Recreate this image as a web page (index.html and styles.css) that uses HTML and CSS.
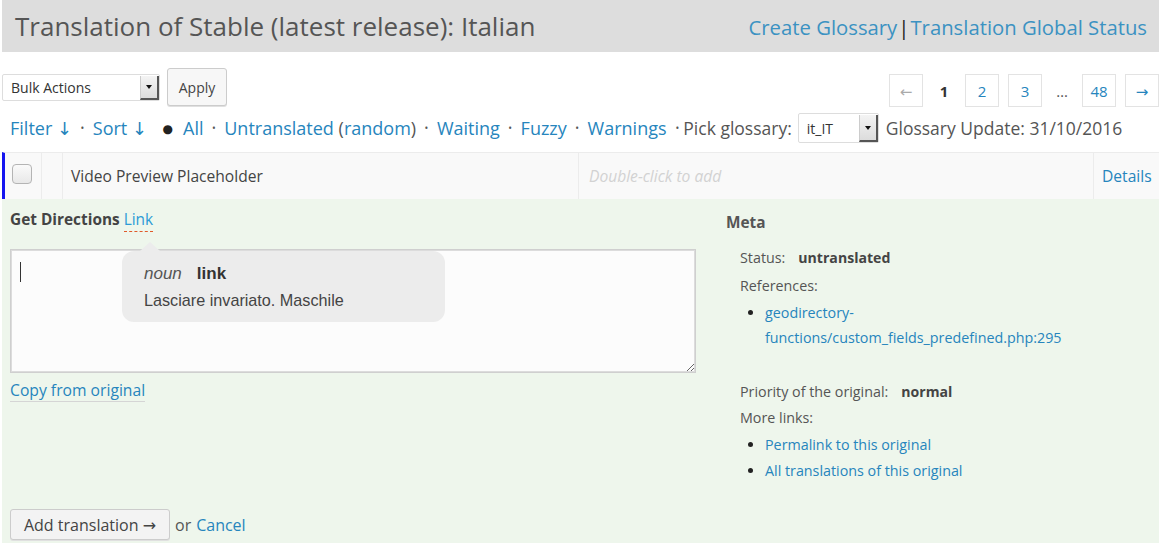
FILE: index.html
```html
<!DOCTYPE html>
<html lang="en">
<head>
<meta charset="utf-8">
<title>Translation of Stable (latest release): Italian</title>
<link rel="stylesheet" href="styles.css">
</head>
<body>
<header class="gp-head">
  <h2 class="gp-title">Translation of Stable (latest release): Italian</h2>
  <div class="glossary-links"><a href="#">Create Glossary</a><span class="sep">|</span><a href="#">Translation Global Status</a></div>
</header>

<div class="toolbar">
  <div class="bulk">
    <div class="fake-select bulk-select"><span class="fs-label">Bulk Actions</span><span class="fs-arrow"></span></div>
    <button class="btn apply">Apply</button>
  </div>
  <nav class="paging">
    <span class="pbox prev">&larr;</span>
    <span class="pcur">1</span>
    <a class="pbox" href="#">2</a>
    <a class="pbox" href="#">3</a>
    <span class="pdots">&hellip;</span>
    <a class="pbox" href="#">48</a>
    <a class="pbox next" href="#">&rarr;</a>
  </nav>
</div>

<div class="filters">
  <a href="#">Filter &darr;</a><span class="dot">&bull;</span><a href="#">Sort &darr;</a><span class="bigdot">&#9679;</span><a href="#">All</a><span class="dot">&bull;</span><a href="#">Untranslated</a>&nbsp;<span class="paren">(</span><a href="#">random</a><span class="paren">)</span><span class="dot">&bull;</span><a href="#">Waiting</a><span class="dot">&bull;</span><a href="#">Fuzzy</a><span class="dot">&bull;</span><a href="#">Warnings</a><span class="dot tight">&bull;</span><span class="label">Pick glossary:</span>
  <div class="fake-select gl-select"><span class="fs-label">it_IT</span><span class="fs-arrow"></span></div>
  <span class="label">Glossary Update: 31/10/2016</span>
</div>

<div class="translations">
  <div class="preview">
    <div class="cell c-check"><span class="checkbox"></span></div>
    <div class="cell c-prio"></div>
    <div class="cell c-orig">Video Preview Placeholder</div>
    <div class="cell c-trans">Double-click to add</div>
    <div class="cell c-act"><a href="#">Details</a></div>
  </div>

  <div class="editor">
    <div class="editor-grid">
      <div class="strings">
        <div class="original"><span class="orig-text">Get Directions</span> <a class="glossary-word" href="#">Link</a></div>
        <div class="textarea-wrap">
          <textarea class="tr-input" rows="4"></textarea>
          <span class="caret"></span>
          <div class="tooltip">
            <div class="tt-head"><em class="pos">noun</em><strong class="term">link</strong></div>
            <div class="tt-body">Lasciare invariato. Maschile</div>
          </div>
        </div>
        <a class="copy" href="#">Copy from original</a>
      </div>
      <div class="meta">
        <h3>Meta</h3>
        <dl>
          <div class="row"><dt>Status:</dt><dd class="strong">untranslated</dd></div>
          <div class="row col"><dt>References:</dt>
            <dd><ul><li><a href="#">geodirectory-<br>functions/custom_fields_predefined.php:295</a></li></ul></dd>
          </div>
          <div class="row gap"><dt>Priority of the original:</dt><dd class="strong">normal</dd></div>
          <div class="row col"><dt>More links:</dt>
            <dd><ul>
              <li><a href="#">Permalink to this original</a></li>
              <li><a href="#">All translations of this original</a></li>
            </ul></dd>
          </div>
        </dl>
      </div>
    </div>
    <div class="actions">
      <button class="btn add">Add translation &rarr;</button>
      <span class="or">or</span> <a href="#">Cancel</a>
    </div>
  </div>
</div>
</body>
</html>
```

FILE: styles.css
```css
html, body {
  margin: 0;
}
body {
  font-family: "Open Sans", "DejaVu Sans", sans-serif;
  color: #555;
  background: #fff;
  padding-left: 2px;
  height: 543px;
  overflow: hidden;
}
a {
  color: #2685bd;
  text-decoration: none;
}

/* header */
.gp-head {
  display: flex;
  align-items: center;
  justify-content: space-between;
  height: 52px;
  background: #dddddd;
  padding: 0 12px 0 13px;
}
.gp-title {
  margin: 0;
  font-size: 26px;
  font-weight: 400;
  color: #555;
}
.glossary-links {
  font-size: 20.3px;
  padding-top: 1px;
}
.glossary-links a {
  color: #3b92c2;
}
.glossary-links .sep {
  color: #222;
  margin: 0 1px;
}

/* toolbar */
.toolbar {
  display: flex;
  justify-content: space-between;
  align-items: flex-start;
  padding-top: 16px;
  height: 40px;
}
.bulk {
  display: flex;
  align-items: flex-start;
  gap: 7px;
}
.fake-select {
  display: flex;
  align-items: stretch;
  background: #fff;
  border: 1px solid #ddd;
  border-radius: 2px;
  box-sizing: border-box;
  font-size: 14px;
  color: #333;
}
.fs-label {
  flex: 1;
  display: flex;
  align-items: center;
  padding-left: 8px;
}
.fs-arrow {
  position: relative;
  width: 16px;
  background: linear-gradient(#f4f4f4, #dcdcdc);
  border-left: 1px solid #ccc;
  border-right: 2px solid #555;
  border-bottom: 2px solid #555;
  margin: 1px 0 0 0;
}
.fs-arrow::after {
  content: "";
  position: absolute;
  left: 5px;
  top: 50%;
  margin-top: -2px;
  border-left: 3px solid transparent;
  border-right: 3px solid transparent;
  border-top: 4px solid #111;
}
.bulk-select {
  width: 158px;
  height: 27px;
  margin-top: 6px;
}
.btn {
  font-family: "Open Sans", "DejaVu Sans", sans-serif;
  color: #444;
  background: #f7f7f7;
  border: 1px solid #ccc;
  border-radius: 3px;
  box-shadow: 0 1px 0 #e0e0e0;
  cursor: pointer;
}
.apply {
  width: 60px;
  height: 38px;
  font-size: 14px;
  padding: 0;
}

.paging {
  display: flex;
  align-items: center;
  gap: 9px;
  margin-top: 6px;
}
.pbox {
  display: flex;
  align-items: center;
  justify-content: center;
  width: 34px;
  height: 33px;
  box-sizing: border-box;
  border: 1px solid #e3e3e3;
  background: #fff;
  font-size: 15px;
}
.pbox.prev {
  color: #aaa;
}
.pcur {
  width: 24px;
  text-align: center;
  font-weight: 700;
  color: #333;
  font-size: 15px;
}
.pdots {
  width: 22px;
  text-align: center;
  color: #555;
  font-size: 15px;
}

/* filters */
.filters {
  display: flex;
  align-items: center;
  height: 40px;
  padding-left: 8px;
  font-size: 18px;
  white-space: nowrap;
}
.filters .dot {
  font-size: 10px;
  color: #555;
  margin: 0 8.5px;
}
.filters .dot.tight {
  margin: 0 4px 0 9px;
}
.filters .bigdot {
  font-size: 12px;
  color: #222;
  margin: 0 10px 0 15.5px;
}
.filters .paren {
  color: #555;
}
.filters .label {
  color: #555;
  font-size: 17.5px;
}
.gl-select {
  width: 81px;
  height: 30px;
  margin: 0 7px 0 6px;
}

/* table row */
.translations {
  margin-top: 4px;
}
.preview {
  display: flex;
  height: 47px;
  box-sizing: border-box;
  background: #f9f9f9;
  border-top: 1px solid #ececec;
  border-left: 3px solid #1515f0;
  font-size: 15.6px;
}
.cell {
  display: flex;
  align-items: center;
  border-right: 1px solid #ececec;
}
.c-check {
  width: 37px;
  padding-left: 7px;
  box-sizing: border-box;
}
.checkbox {
  width: 20px;
  height: 20px;
  box-sizing: border-box;
  border: 1px solid #b4b4b4;
  border-radius: 4px;
  background: linear-gradient(#fafafa, #e8e8e8);
  margin-top: -4px;
}
.c-prio {
  width: 20px;
}
.c-orig {
  width: 516px;
  padding-left: 8px;
  box-sizing: border-box;
  color: #444;
}
.c-trans {
  width: 515px;
  padding-left: 10px;
  box-sizing: border-box;
  font-style: italic;
  color: #d2d2d2;
}
.c-act {
  flex: 1;
  border-right: 0;
  padding-left: 8px;
}

/* editor */
.editor {
  background: #eef6ec;
  padding: 8px 0 40px 8px;
  min-height: 400px;
}
.editor-grid {
  display: grid;
  grid-template-columns: 686px 1fr;
  column-gap: 30px;
}
.original {
  font-size: 15.4px;
  line-height: 24px;
  margin: 1px 0 17px 0;
}
.orig-text {
  font-weight: 700;
  color: #444;
}
.glossary-word {
  border-bottom: 1px dashed #e05a2a;
  padding-bottom: 1px;
  color: #2d9bd6;
}
.textarea-wrap {
  position: relative;
  height: 124px;
}
.tr-input {
  display: block;
  width: 100%;
  height: 124px;
  box-sizing: border-box;
  border: 1px solid #cfcfcf;
  box-shadow: inset 0 0 0 1px #dcdcdc;
  background: #fcfcfc;
  resize: vertical;
  margin: 0;
  font-family: inherit;
}
.caret {
  position: absolute;
  left: 10px;
  top: 13px;
  width: 1px;
  height: 20px;
  background: #333;
}
.tooltip {
  position: absolute;
  left: 112px;
  top: 2px;
  width: 323px;
  height: 71px;
  box-sizing: border-box;
  background: #ececec;
  border-radius: 12px;
  padding: 12px 0 0 22px;
  font-family: "Liberation Sans", Arial, sans-serif;
  color: #333;
}
.tooltip::before {
  content: "";
  position: absolute;
  left: 18px;
  top: -9px;
  border-left: 10px solid transparent;
  border-right: 10px solid transparent;
  border-bottom: 9px solid #ececec;
}
.tt-head {
  font-size: 17px;
  line-height: 22px;
}
.tt-head .pos {
  color: #555;
  margin-right: 15px;
}
.tt-head .term {
  font-weight: 700;
  color: #333;
}
.tt-body {
  margin-top: 6px;
  font-size: 16.2px;
  color: #444;
}
.copy {
  display: inline-block;
  margin-top: 6px;
  font-size: 15.7px;
  line-height: 22px;
  border-bottom: 1px solid #d5d5d5;
}

.meta {
  font-size: 14.3px;
  color: #555;
}
.meta h3 {
  margin: 5px 0 11px 0;
  font-size: 15.4px;
  font-weight: 700;
  color: #555;
  line-height: 22px;
}
.meta dl {
  margin: 0;
  padding-left: 14px;
}
.meta .row {
  display: flex;
  line-height: 26px;
  margin-bottom: 2px;
}
.meta .row.col {
  display: block;
  margin-bottom: 0;
}
.meta .row.gap {
  margin-top: 29px;
  margin-bottom: 0;
}
.meta dt {
  margin: 0;
}
.meta dd {
  margin: 0 0 0 13px;
}
.meta .row.col dd {
  margin: 0;
}
.meta dd.strong {
  font-weight: 700;
  color: #444;
  font-size: 14.1px;
}
.meta ul {
  margin: 1px 0 0 0;
  padding-left: 25px;
}
.meta li {
  line-height: 25px;
  margin-bottom: 1px;
}
.meta li::marker {
  color: #222;
}

.actions {
  margin-top: 25px;
  display: flex;
  align-items: center;
  font-size: 16px;
}
.add {
  width: 160px;
  height: 31px;
  font-size: 16px;
  padding: 0;
  background: #f3f3f3;
}
.actions .or {
  margin: 0 5px 0 5px;
}
```
